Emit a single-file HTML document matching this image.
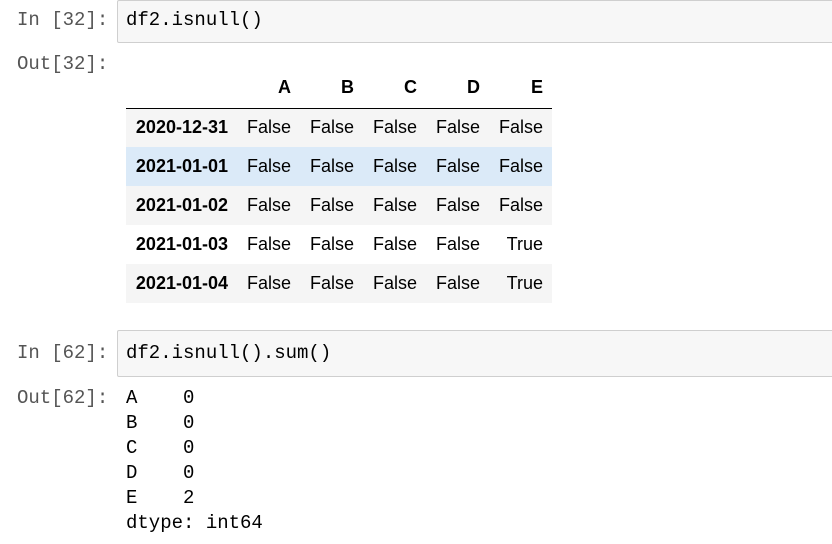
<!DOCTYPE html><html><head><style>
body{margin:0;width:832px;height:544px;background:#fff;position:relative;overflow:hidden;font-family:"Liberation Mono",monospace;}
.m{position:absolute;font-family:"Liberation Mono",monospace;font-size:19px;line-height:25px;white-space:pre;}
.lbl{color:#555;}
.box{position:absolute;left:117px;width:720px;background:#f7f7f7;border:1px solid #cfcfcf;border-radius:2px;box-sizing:border-box;}
table{position:absolute;left:126px;top:68px;border-collapse:collapse;font-family:"Liberation Sans",sans-serif;font-size:18px;color:#000;}
td,th{height:39px;padding:0 9px 0 9px;text-align:right;box-sizing:border-box;}
th{font-weight:bold;}
thead th{border-bottom:1px solid #000;height:40px;}
td{width:63px;}
tbody tr:nth-child(odd){background:#f5f5f5;}
tbody tr.h{background:#dbeaf8;}
</style></head><body>
<div class="box" style="top:0;height:43px"></div>
<div class="m lbl" style="left:17px;top:8px">In [32]:</div>
<div class="m" style="left:126px;top:8px;color:#000">df2.isnull()</div>
<div class="m lbl" style="left:17px;top:52px">Out[32]:</div>
<table><thead><tr><th style="width:111px"></th><th>A</th><th>B</th><th>C</th><th>D</th><th>E</th></tr></thead>
<tbody>
<tr><th>2020-12-31</th><td>False</td><td>False</td><td>False</td><td>False</td><td>False</td></tr>
<tr class="h"><th>2021-01-01</th><td>False</td><td>False</td><td>False</td><td>False</td><td>False</td></tr>
<tr><th>2021-01-02</th><td>False</td><td>False</td><td>False</td><td>False</td><td>False</td></tr>
<tr style="background:#fff"><th>2021-01-03</th><td>False</td><td>False</td><td>False</td><td>False</td><td>True</td></tr>
<tr><th>2021-01-04</th><td>False</td><td>False</td><td>False</td><td>False</td><td>True</td></tr>
</tbody></table>
<div class="box" style="top:330px;height:47px"></div>
<div class="m lbl" style="left:17px;top:341px">In [62]:</div>
<div class="m" style="left:126px;top:341px;color:#000">df2.isnull().sum()</div>
<div class="m lbl" style="left:17px;top:386px">Out[62]:</div>
<div class="m" style="left:126px;top:386px;color:#000">A    0
B    0
C    0
D    0
E    2
dtype: int64</div>
</body></html>
